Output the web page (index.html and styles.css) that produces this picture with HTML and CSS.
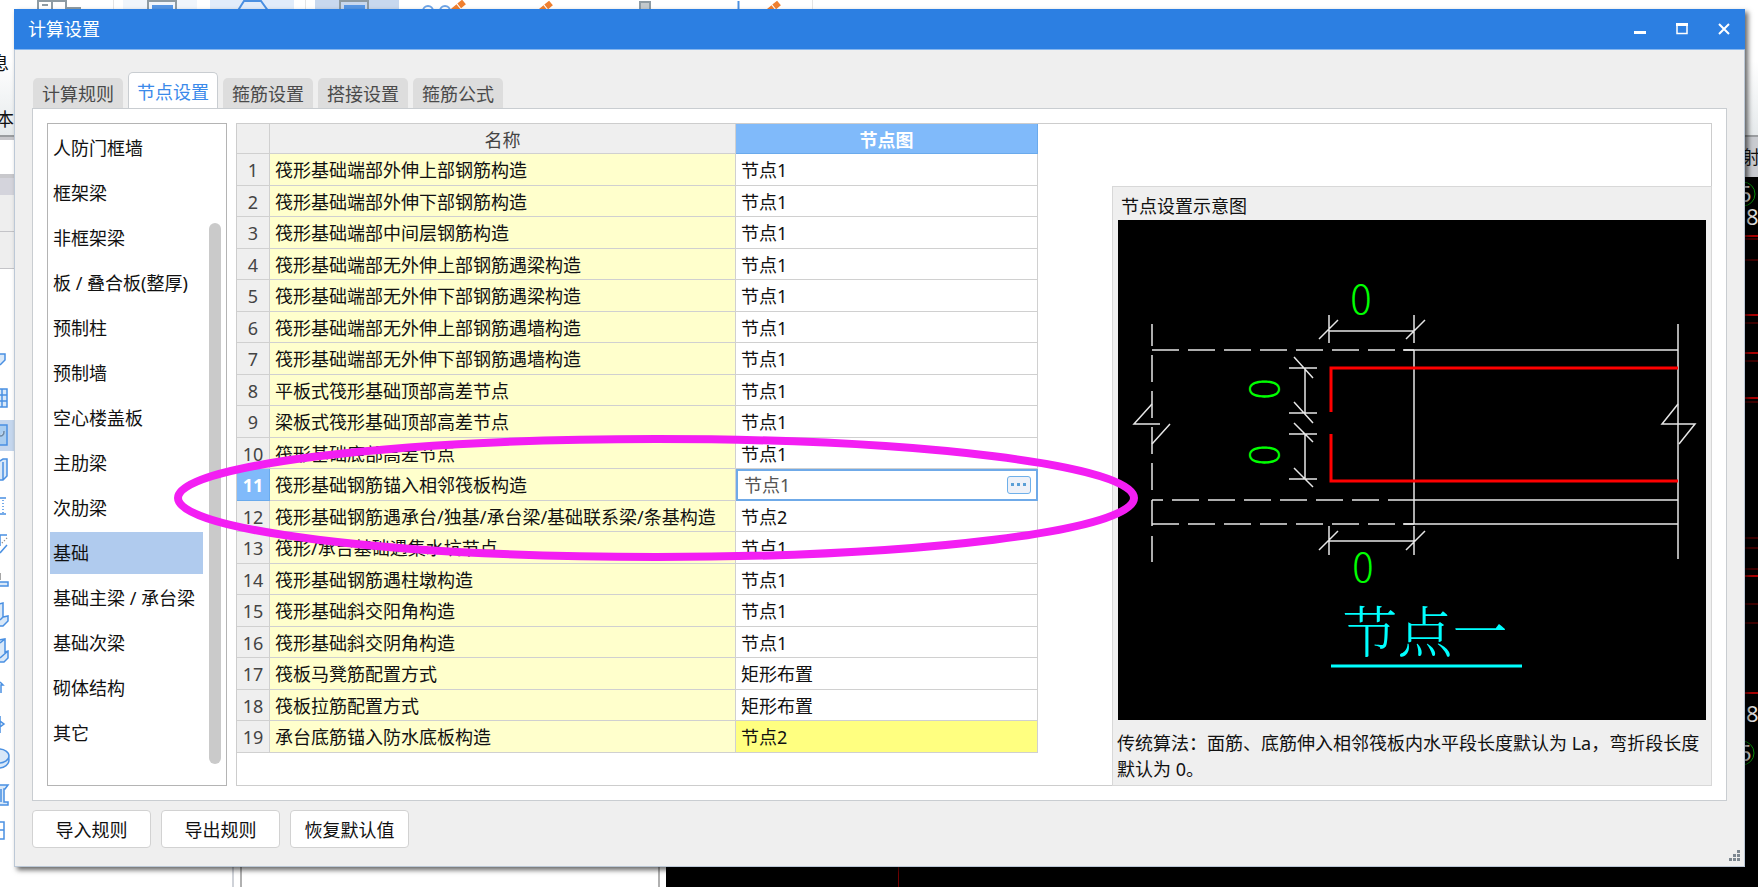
FILE: index.html
```html
<!DOCTYPE html>
<html lang="zh-CN">
<head>
<meta charset="utf-8">
<title>计算设置</title>
<link rel="stylesheet" href="styles.css">
</head>
<body>
<div class="backdrop" aria-hidden="true">
  <div class="backdrop-ribbon">
    <svg width="880" height="12" fill="none">
      <rect x="123" width="74" height="12" fill="#f0f5fb"/>
      <rect x="210" width="84" height="12" fill="#e1ecfa"/>
      <rect x="315" width="84" height="12" fill="#c8d8ee"/>
      <path d="M113.500 0V12M305.500 0V12M812.500 0V12" stroke="#e4e4e4"/>
      <path d="M38 12V1H66V12M52 1V12M42 5H48M66 8H81" stroke="#8e9ba3" stroke-width="2"/>
      <path d="M148 12V1H176V12M340 12V1H368V12" stroke="#8e9ba3" stroke-width="2"/>
      <path d="M152 5H173V12H152ZM344 5H365V12H344Z" fill="#5596e4"/>
      <path d="M237 12L244 1H261L269 12" stroke="#4a90e2" stroke-width="2"/>
      <circle cx="428" cy="11" r="5" stroke="#6fa5e6" stroke-width="2"/>
      <circle cx="445" cy="11" r="5" stroke="#6fa5e6" stroke-width="2"/>
      <path d="M453 11L464 2M540 12L551 3M768 12L779 3" stroke="#f08030" stroke-width="6" stroke-dasharray="7 1"/>
      <rect x="640" y="2" width="10" height="12" fill="#c3c9cc" stroke="#8e9ba3" stroke-width="2"/>
      <path d="M738.500 1V12" stroke="#4a90e2" stroke-width="2"/>
    </svg>
  </div>
  <div class="backdrop-left">
    <div class="edge-ribbon"><span>信息</span><span>基本</span></div>
    <div class="edge-field"></div>
    <div class="edge-head"></div>
    <div class="edge-row"></div>
    <div class="edge-row"></div>
    <svg class="edge-tools" width="14" height="600" fill="#d9e8f8" stroke="#4a90e2" stroke-width="1.500">
      <rect y="150" width="14" height="31" fill="#c5d7ee" stroke="none"/>
      <path d="M0 84H5V90L0 95"/>
      <path d="M-2 119H7V137H-2M-2 125H7M-2 131H7M2 119V137"/>
      <path d="M-2 155H7V175H-2Z" fill="#a9cdf0"/><path d="M0 166Q4 166 4 161" stroke="#6f8aa5"/>
      <path d="M-2 192L3 189H7V206L3 210H-2M3 192V210"/>
      <path d="M-2 228H6M-2 244H6" /><path d="M3 230V243" stroke-dasharray="1 2"/>
      <path d="M0 276V265H7M0 283L7 275" fill="none"/><path d="M2 273L7 268" stroke="#888" stroke-dasharray="1 2"/>
      <path d="M-2 312H8V316H-2Z"/><path d="M0 303V310" stroke="#888"/>
      <path d="M-1 334L3 333V347L8 346V351L3 356H-1ZM0 350L3 347"/>
      <path d="M-1 370L5 369V382L8 381V388L4 392H-1ZM0 373L5 369M0 388L8 381"/>
      <path d="M0 412L3 415H1V423" fill="none"/>
      <path d="M0 446V463M0 451L4 454L0 457"/>
      <ellipse cx="-1" cy="490" rx="10" ry="8"/><ellipse cx="-1" cy="486" rx="10" ry="7"/>
      <path d="M-1 515H8L5 519H4V532H8V535H-1M1 519V532"/>
      <path d="M-2 552H4V569H-2M-2 560H4" fill="none"/>
    </svg>
  </div>
  <div class="backdrop-right">
    <div class="edge-ribbon"></div>
    <div class="edge-label">射</div>
    <svg class="edge-canvas" width="13" height="711" fill="none">
      <circle cx="-2" cy="17" r="12" stroke="#0a8a0a"/>
      <path d="M0 59H13M0 138H13M0 176H13M0 221H13M0 399H13M0 516H13" stroke="#e00000" stroke-width="1.500"/>
      <path d="M0 62H13M0 83H13M0 146H13M0 184H13M0 225H13M0 361H13M0 371H13M0 392H13M0 427H13M0 446H13" stroke="#7a0000"/>
      <circle cx="-3" cy="576" r="12" stroke="#0a8a0a"/>
      <g class="canvas-text"><text x="-6" y="25">5</text><text x="1" y="48">8</text><text x="1" y="545">8</text><text x="-6" y="584">5</text></g>
    </svg>
  </div>
  <div class="backdrop-bottom">
    <div class="dock dock-a"></div><div class="dock dock-b"></div><div class="dock-canvas"></div>
  </div>
</div>

<main class="dialog" aria-labelledby="dlg-title">
  <header class="titlebar">
    <h1 id="dlg-title">计算设置</h1>
    <div class="window-buttons">
      <button aria-label="最小化"><svg width="14" height="14"><path d="M1 10.500H13" stroke="#fff" stroke-width="3"/></svg></button>
      <button aria-label="最大化"><svg width="14" height="14" fill="none" stroke="#fff"><path d="M2 2V11.500H12V2" stroke-width="1.500"/><path d="M1 2.500H13" stroke-width="3"/></svg></button>
      <button aria-label="关闭"><svg width="14" height="14"><path d="M2 2L12 12M12 2L2 12" stroke="#fff" stroke-width="2"/></svg></button>
    </div>
  </header>

  <div class="dialog-body">
    <nav class="tabs" role="tablist">
      <button class="tab" role="tab">计算规则</button>
      <button class="tab tab-active" role="tab" aria-selected="true">节点设置</button>
      <button class="tab" role="tab">箍筋设置</button>
      <button class="tab" role="tab">搭接设置</button>
      <button class="tab" role="tab">箍筋公式</button>
    </nav>

    <section class="pane">
      <div class="category-box">
        <ul class="categories">
          <li>人防门框墙</li><li>框架梁</li><li>非框架梁</li><li>板 / 叠合板(整厚)</li><li>预制柱</li><li>预制墙</li><li>空心楼盖板</li><li>主肋梁</li><li>次肋梁</li><li class="selected">基础</li><li>基础主梁 / 承台梁</li><li>基础次梁</li><li>砌体结构</li><li>其它</li>
        </ul>
        <div class="scroll-track"><div class="scroll-thumb"></div></div>
      </div>

      <div class="detail">
        <div class="table-wrap">
          <table class="nodes">
            <thead><tr><th class="num"></th><th class="name">名称</th><th class="node node-head">节点图</th></tr></thead>
            <tbody>
              <tr><th>1</th><td>筏形基础端部外伸上部钢筋构造</td><td>节点1</td></tr>
              <tr><th>2</th><td>筏形基础端部外伸下部钢筋构造</td><td>节点1</td></tr>
              <tr><th>3</th><td>筏形基础端部中间层钢筋构造</td><td>节点1</td></tr>
              <tr><th>4</th><td>筏形基础端部无外伸上部钢筋遇梁构造</td><td>节点1</td></tr>
              <tr><th>5</th><td>筏形基础端部无外伸下部钢筋遇梁构造</td><td>节点1</td></tr>
              <tr><th>6</th><td>筏形基础端部无外伸上部钢筋遇墙构造</td><td>节点1</td></tr>
              <tr><th>7</th><td>筏形基础端部无外伸下部钢筋遇墙构造</td><td>节点1</td></tr>
              <tr><th>8</th><td>平板式筏形基础顶部高差节点</td><td>节点1</td></tr>
              <tr><th>9</th><td>梁板式筏形基础顶部高差节点</td><td>节点1</td></tr>
              <tr><th>10</th><td>筏形基础底部高差节点</td><td>节点1</td></tr>
              <tr class="current"><th>11</th><td>筏形基础钢筋锚入相邻筏板构造</td><td class="editing"><div class="editor"><input type="text" value="节点1" aria-label="节点图"><button class="more" aria-label="选择节点"><svg width="16" height="4" fill="#5b9fd6"><rect width="3" height="3"/><rect x="6" width="3" height="3"/><rect x="12" width="3" height="3"/></svg></button></div></td></tr>
              <tr><th>12</th><td>筏形基础钢筋遇承台/独基/承台梁/基础联系梁/条基构造</td><td>节点2</td></tr>
              <tr><th>13</th><td>筏形/承台基础遇集水坑节点</td><td>节点1</td></tr>
              <tr><th>14</th><td>筏形基础钢筋遇柱墩构造</td><td>节点1</td></tr>
              <tr><th>15</th><td>筏形基础斜交阳角构造</td><td>节点1</td></tr>
              <tr><th>16</th><td>筏形基础斜交阴角构造</td><td>节点1</td></tr>
              <tr><th>17</th><td>筏板马凳筋配置方式</td><td>矩形布置</td></tr>
              <tr><th>18</th><td>筏板拉筋配置方式</td><td>矩形布置</td></tr>
              <tr><th>19</th><td>承台底筋锚入防水底板构造</td><td class="changed">节点2</td></tr>
            </tbody>
          </table>
        </div>

        <aside class="preview">
          <h2>节点设置示意图</h2>
          <svg class="diagram" viewBox="0 0 588 500" fill="none" stroke="#e6e6e6" stroke-width="1.500">
            <path d="M34 104V126M34 135V162M34 171V198M34 207V234M34 243V270M34 280V306M34 316V342"/>
            <path d="M34 130H296M34 304H296" stroke-dasharray="27 9"/>
            <path d="M34 280H45M54 280H270" stroke-dasharray="27 9"/>
            <path d="M285 130H560M270 280H560M285 304H560M296 130V304M560 104V339"/>
            <path d="M211 95V123M296 95V123M211 111H296M201 119L220 100M288 119L307 100"/>
            <path d="M211 306V335M296 306V335M211 321H296M201 330L220 311M288 330L307 311"/>
            <path d="M187 148V193M171 148H199M171 193H199M176 137L195 158M176 182L195 203"/>
            <path d="M187 214V259M171 214H199M171 259H199M176 203L195 222M176 248L195 267"/>
            <path d="M34 184L16 204H42M52 204L34 224M560 184L544 204H577L561 224"/>
            <path d="M213 192V148H560M213 214V261H560" stroke="#f00" stroke-width="3"/>
            <path d="M213 446H404" stroke="#0ff" stroke-width="3"/>
            <g class="dimension">
              <text x="243" y="94">0</text>
              <text x="245" y="362">0</text>
              <text transform="translate(161 169) rotate(-90)">0</text>
              <text transform="translate(161 235) rotate(-90)">0</text>
            </g>
            <text class="caption" x="307" y="432">节点一</text>
          </svg>
          <p>传统算法：面筋、底筋伸入相邻筏板内水平段长度默认为 La，弯折段长度默认为 0。</p>
        </aside>
      </div>
      <svg class="marker" viewBox="0 0 964 126" fill="none"><ellipse cx="482" cy="63" rx="478" ry="59" stroke="#f31ef3" stroke-width="8"/></svg>
    </section>

    <footer class="actions">
      <button>导入规则</button>
      <button>导出规则</button>
      <button>恢复默认值</button>
    </footer>
  </div>
  <svg class="grip" width="12" height="12" fill="#7d8790"><path d="M8 0h3v3H8zM4 4h3v3H4zM8 4h3v3H8zM0 8h3v3H0zM4 8h3v3H4zM8 8h3v3H8z"/></svg>
</main>
</body>
</html>
```
FILE: styles.css
```css
* { box-sizing: border-box; }

body {
  margin: 0;
  min-height: 100vh;
  display: flex;
  position: relative;
  background: #fff;
  color: #111;
  font: 18px/26px "Noto Sans", "Noto Sans CJK SC", sans-serif;
}

button, input { font: inherit; color: inherit; }
h1, h2, p, ul { margin: 0; padding: 0; font-size: inherit; font-weight: normal; }

/* Main application showing around the dialog */
.backdrop { position: absolute; inset: 0; overflow: hidden; }
.backdrop-ribbon { position: absolute; top: 0; left: 0; right: 0; height: 12px; }
.backdrop-ribbon svg { display: block; }
.backdrop-left { position: absolute; top: 0; left: 0; bottom: 0; width: 14px; overflow: hidden; }
.backdrop-right { position: absolute; top: 0; right: 0; bottom: 0; width: 13px; overflow: hidden; background: #000; }
.edge-ribbon {
  height: 137px;
  padding-top: 50px;
  display: flex;
  flex-direction: column;
  align-items: flex-end;
  gap: 30px;
  background: linear-gradient(#fff 45%, #e6eaec);
  border-bottom: 2px solid #9a9da0;
  white-space: nowrap;
}
.edge-ribbon span:first-child { margin-right: 5px; }
.edge-field { height: 41px; border: solid #c8c8cc; border-width: 3px 0 4px; background: #fff; }
.edge-head { height: 17px; background: #d4d4dc; }
.edge-row { height: 37px; background: #eee; border-bottom: 1px solid #c4c4c8; }
.edge-tools { display: block; margin-top: 1px; }
.edge-label { height: 40px; padding-top: 7px; background: #c9cbd0; text-indent: -3px; white-space: nowrap; }
.edge-canvas { display: block; }
.canvas-text { fill: #ddd; font-size: 22px; line-height: 22px; }
.backdrop-bottom { position: absolute; left: 0; right: 0; bottom: 0; height: 20px; display: flex; background: #fff; }
.dock-a { width: 234px; border-right: 2px solid #cfd2d8; }
.dock-b { width: 420px; margin: 0 6px; border: solid #b0b0b0; border-width: 0 2px; }
.dock-canvas { flex: 1; background: linear-gradient(#700000, #700000) 232px 0 / 1px 100% no-repeat #000; }

/* Dialog window */
.dialog {
  position: relative;
  flex: 1;
  min-width: 0;
  margin: 9px 13px 20px 14px;
  display: flex;
  flex-direction: column;
  background: #efefef;
  box-shadow: 3px 3px 5px rgba(0, 0, 0, .6);
}
.titlebar {
  height: 41px;
  padding: 0 8px 0 14px;
  display: flex;
  align-items: center;
  justify-content: space-between;
  background: #2c7fe2;
  border-bottom: 1px solid #86b6ee;
  color: #fff;
}
.window-buttons { display: flex; gap: 16px; }
.window-buttons button { width: 26px; height: 26px; padding: 0; border: 0; background: none; display: grid; place-items: center; }

.dialog-body {
  flex: 1;
  display: flex;
  flex-direction: column;
  padding: 22px 17px 18px;
  border: 1px solid #bcc8d6;
  border-top: 0;
}

.tabs { display: flex; align-items: flex-end; gap: 5px; padding-left: 1px; }
.tab {
  height: 30px;
  padding: 2px 9px 0;
  border: 0;
  border-radius: 5px 5px 0 0;
  background: #ddd;
  color: #4a4a4a;
}
.tab-active {
  position: relative;
  height: 37px;
  margin-bottom: -1px;
  padding: 2px 8px 0;
  border: 1px solid #c9cdd1;
  border-bottom: 0;
  background: #fff;
  color: #3b8aea;
}

.pane {
  position: relative;
  flex: 1;
  display: flex;
  gap: 9px;
  padding: 14px;
  background: #fff;
  border: 1px solid #c9cdd1;
}

.category-box { width: 180px; display: flex; justify-content: space-between; border: 1px solid #b4b4b4; padding: 3px 5px 21px 2px; }
.categories { list-style: none; display: flex; flex-direction: column; gap: 3px; }
.categories li { width: 153px; height: 42px; padding-left: 3px; line-height: 42px; white-space: nowrap; }
.categories .selected { background: #b0cbee; }
.scroll-track { width: 12px; padding-top: 96px; display: flex; }
.scroll-thumb { flex: 1; background: #cacaca; border-radius: 6px; }

.detail { flex: 1; min-width: 0; display: flex; border: 1px solid #cdcdcd; }
.table-wrap { flex: 1; min-width: 0; }
.nodes { border-collapse: separate; border-spacing: 0; table-layout: fixed; width: 801px; line-height: 24px; }
.nodes th, .nodes td {
  height: 31px;
  padding: 1px 0 0 5px;
  border: solid #d0d0d0;
  border-width: 0 1px 1px 0;
  text-align: left;
  font-weight: normal;
  white-space: nowrap;
}
.nodes tbody tr:nth-child(odd) > * { height: 32px; }
.nodes thead th { height: 30px; padding: 2px 0 0; background: #efefef; text-align: center; color: #444; }
.nodes tbody th { padding: 1px 0 0; background: #efefef; color: #444; text-align: center; }
.nodes .num { width: 33px; }
.nodes .name { width: 466px; }
.nodes td:nth-child(2) { background: #ffffcc; }
.nodes .node-head { background: #80bafa; border-color: #6aaaec; color: #fff; font-weight: bold; }
.nodes .current th { background: #80bafa; border-color: #6aaaec; color: #fff; font-weight: bold; }
.nodes .changed { background: #ffff80; }
.nodes .editing { padding: 0; border: 2px solid #6faae8; }
.editor { display: flex; align-items: center; padding: 0 5px 0 6px; }
.editor input { flex: 1; min-width: 0; height: 24px; padding: 0; border: 0; outline: 0; background: none; color: #555; }
.more { width: 24px; height: 18px; padding: 0; display: grid; place-items: center; border: 1px solid #6fb0ea; border-radius: 3px; background: #eef1f8; }

.preview {
  width: 600px;
  margin: 62px -1px -1px 0;
  padding: 6px 5px 0;
  background: #efefef;
  border: 1px solid #d8d8d8;
}
.preview h2 { padding: 0 0 1px 3px; }
.diagram { display: block; width: 100%; height: auto; background: #000; }
.preview p { margin-left: -1px; padding-top: 10px; }
.dimension { fill: #0f0; stroke: none; font: 300 40px "Noto Sans CJK SC", sans-serif; text-anchor: middle; }
.caption { fill: #0ff; stroke: none; font: 300 55px "Noto Serif CJK SC", "Noto Sans CJK SC", serif; text-anchor: middle; }

/* Hand-drawn highlight over rows 11 and 12 */
.marker { position: absolute; left: 141px; top: 326px; width: 964px; height: 126px; pointer-events: none; }

.actions { display: flex; gap: 10px; padding-top: 9px; }
.actions button { width: 119px; height: 38px; padding: 2px 0 0; background: #fff; border: 1px solid #d2d2d2; border-radius: 4px; }

.grip { position: absolute; right: 4px; bottom: 5px; }
```
